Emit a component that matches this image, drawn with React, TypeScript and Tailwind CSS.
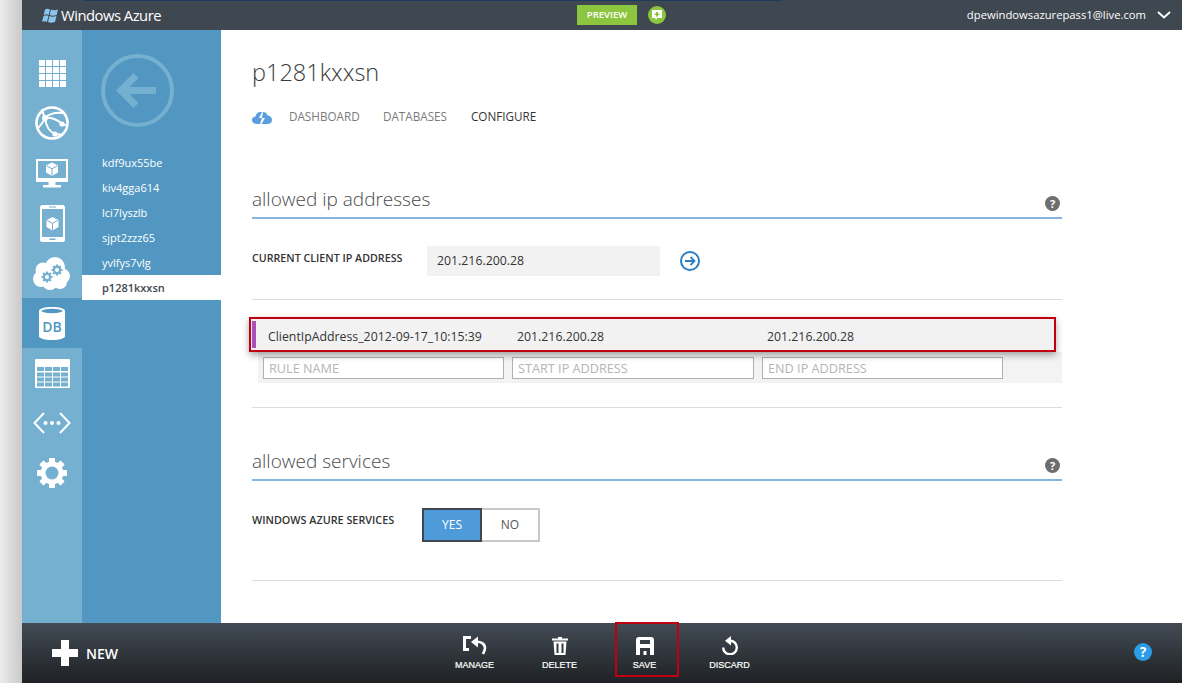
import type { ReactNode } from "react";

const FONT = { fontFamily: '"Open Sans", "Noto Sans", sans-serif' };
const RAIL = "#75b0d0";
const LIST = "#5197c1";

function GridIcon() {
  const cells = [0, 7, 14, 21];
  return (
    <svg width="27" height="27" viewBox="0 0 27 27" fill="#fff">
      {cells.map((y) => cells.map((x) => <rect key={`${x}-${y}`} x={x} y={y} width="6" height="6" />))}
    </svg>
  );
}

function GlobeIcon() {
  return (
    <svg width="34" height="34" viewBox="0 0 34 34" fill="none" stroke="#fff" strokeWidth="2">
      <circle cx="17" cy="17" r="15.500" strokeWidth="2.600" />
      <path d="M7 3c1 4 2 7 3 9M10 12c4-4 10-6 18-5M10 12c5-1 12 1 17 6l6 2M10 12c-2 5-5 8-8 11M10 12c1 8 5 14 10 16 3 0 6 1 8 1" />
      <circle cx="10" cy="12" r="3" fill="#fff" stroke="none" />
      <circle cx="27" cy="18" r="2.600" fill="#fff" stroke="none" />
      <circle cx="20" cy="28" r="2.600" fill="#fff" stroke="none" />
    </svg>
  );
}

function Cube({ x, y, s }: { x: number; y: number; s: number }) {
  return (
    <g transform={`translate(${x} ${y}) scale(${s})`}>
      <path d="M6 0l6 3v7l-6 3.500L0 10V3z" fill="#fff" />
      <path d="M0.500 3.300L6 6.300l5.500-3M6 6.300v7" fill="none" stroke={RAIL} strokeWidth="1" />
    </g>
  );
}

function MonitorIcon() {
  return (
    <svg width="32" height="29" viewBox="0 0 32 29">
      <path d="M0 0h32v23H19.500v3H25v2.500H7V26h5.500v-3H0z" fill="#fff" />
      <rect x="2" y="2" width="28" height="17" fill={RAIL} />
      <Cube x={10} y={3.500} s={1} />
    </svg>
  );
}

function PhoneIcon() {
  return (
    <svg width="25" height="37" viewBox="0 0 25 37">
      <rect width="25" height="37" rx="2.500" fill="#fff" />
      <rect x="2" y="4" width="21" height="28" fill={RAIL} />
      <rect x="9" y="1.500" width="7" height="1" fill={RAIL} />
      <rect x="9.500" y="33.500" width="6" height="1.500" fill={RAIL} />
      <Cube x={6.500} y={12} s={1} />
    </svg>
  );
}

function Cog({ cx, cy, r, fill, hole, holeR }: { cx: number; cy: number; r: number; fill: string; hole: string; holeR: number }) {
  return (
    <g>
      {[0, 45, 90, 135].map((a) => (
        <rect key={a} x={cx - r * 0.2} y={cy - r} width={r * 0.4} height={r * 2} rx={r * 0.06} fill={fill} transform={`rotate(${a} ${cx} ${cy})`} />
      ))}
      <circle cx={cx} cy={cy} r={r * 0.76} fill={fill} />
      <circle cx={cx} cy={cy} r={holeR} fill={hole} />
    </g>
  );
}

function CloudGearsIcon() {
  const puffs = [[10, 13, 7.5], [22, 10, 10], [8, 22, 8], [29.500, 19, 7.5], [27, 25, 7], [17, 25, 8]];
  return (
    <svg width="38" height="33" viewBox="0 0 38 33">
      {puffs.map(([cx, cy, r]) => <circle key={`${cx}-${cy}`} cx={cx} cy={cy} r={r} fill="#fff" />)}
      <Cog cx={14} cy={20} r={5.500} fill={RAIL} hole="#fff" holeR={2} />
      <Cog cx={24} cy={13} r={5.500} fill={RAIL} hole="#fff" holeR={2} />
    </svg>
  );
}

function DbIcon() {
  return (
    <div className="relative w-[26px] h-[33px]">
      <svg width="26" height="33" viewBox="0 0 26 33" className="absolute inset-0">
        <path d="M0 4C0 1.500 6 0 13 0s13 1.500 13 4v25c0 2.500-6 4-13 4S0 31.500 0 29z" fill="#fff" />
        <ellipse cx="13" cy="4" rx="10.500" ry="2.200" fill={LIST} />
      </svg>
      <span className="absolute left-0 right-0 top-[10px] text-center text-[14px] leading-[20px] font-semibold text-[#5197c1]">DB</span>
    </div>
  );
}

function TableIcon() {
  const rows = [8, 13.500, 18.500, 23.500];
  const cols = [2, 10, 18, 26];
  return (
    <svg width="35" height="29" viewBox="0 0 35 29">
      <rect width="35" height="29" rx="1" fill="#fff" />
      {rows.map((y) => cols.map((x) => <rect key={`${x}-${y}`} x={x} y={y} width="7" height="4" fill={RAIL} />))}
    </svg>
  );
}

function CodeIcon() {
  return (
    <svg width="38" height="22" viewBox="0 0 38 22" fill="none" stroke="#fff" strokeWidth="2">
      <path d="M11 1L1.500 11 11 21M27 1l9.500 10L27 21" />
      <circle cx="12.500" cy="11" r="2" fill="#fff" stroke="none" />
      <circle cx="19" cy="11" r="2" fill="#fff" stroke="none" />
      <circle cx="25.500" cy="11" r="2" fill="#fff" stroke="none" />
    </svg>
  );
}

function GearIcon() {
  return (
    <svg width="30" height="30" viewBox="0 0 30 30">
      <Cog cx={15} cy={15} r={15} fill="#fff" hole={RAIL} holeR={6.500} />
    </svg>
  );
}

function HelpDot() {
  return (
    <span className="mb-[3px] w-[15px] h-[15px] rounded-full bg-[#6d6e70] text-white text-[11px] leading-[15px] font-bold text-center">?</span>
  );
}

function SectionHeading({ title }: { title: string }) {
  return (
    <div className="flex items-end justify-between h-[38px] border-b-2 border-[#84b4e0] pb-[3px] pr-[2px]">
      <h2 className="text-[19px] leading-[30px] font-light text-[#4a4a4a]">{title}</h2>
      <HelpDot />
    </div>
  );
}

function ToolbarAction({ label, children }: { label: string; children: ReactNode }) {
  return (
    <div className="w-[85px] mb-[2px] flex flex-col items-center">
      <div className="h-[24px] flex items-center justify-center">{children}</div>
      <span className="mt-[1px] text-[9px] leading-[12px] text-white [-webkit-text-stroke:0.2px_#fff]" style={{ fontFamily: '"Liberation Sans", sans-serif' }}>{label}</span>
    </div>
  );
}

const navIcons = [GridIcon, GlobeIcon, MonitorIcon, PhoneIcon, CloudGearsIcon, DbIcon, TableIcon, CodeIcon, GearIcon];
const servers = ["kdf9ux55be", "kiv4gga614", "lci7lyszlb", "sjpt2zzz65", "yvlfys7vlg"];

export default function App() {
  return (
    <div className="relative flex w-[1182px] h-[683px] overflow-hidden bg-white" style={FONT}>
      <div className="w-[22px] shrink-0 bg-gradient-to-r from-[#ececec] to-[#c9c9c9]" />
      <div className="flex-1 flex flex-col min-w-0">
        {/* top bar */}
        <header className="h-[30px] shrink-0 bg-[#3f4750] flex items-center text-white relative">
          <div className="w-[20px] shrink-0" />
          <svg width="17" height="15" viewBox="0 0 17 15">
            <path d="M3 1.500c2-1 3-1 5 0L6.700 7c-2-1-3-1-5 0zM9 1.500c2 1 4 1 7 0L14.700 7c-3 1-5 1-7 0zM1.500 8c2-1 3-1 5 0L5 14c-2-1-3-1-5 0zM7.500 8c2 1 4 1 7 0L13 14c-3 1-5 1-7 0z" fill="#8ac4ea" />
          </svg>
          <span className="ml-[2px] text-[14.800px] tracking-[-0.5px]">Windows Azure</span>
          <div className="w-[416px] shrink-0" />
          <span className="w-[60px] h-[20px] bg-[#8cc63f] text-[9.500px] leading-[20px] text-center font-semibold">PREVIEW</span>
          <span className="ml-[11px] w-[18px] h-[18px] rounded-full bg-[#8cc63f] flex items-center justify-center">
            <svg width="12" height="12" viewBox="0 0 12 12">
              <path d="M1 1h10v8H6l-1 2-1-2H1z" fill="#fff" />
              <path d="M5 3h2v1.500h1.500v1.500H7v1.500H5V6H3.500V4.500H5z" fill="#8cc63f" />
            </svg>
          </span>
          <span className="ml-auto text-[11.250px] mr-[11px]">dpewindowsazurepass1@live.com</span>
          <svg width="14" height="8" viewBox="0 0 14 8" fill="none" stroke="#fff" strokeWidth="2" className="mr-[11px]">
            <path d="M1 1l6 5.500L13 1" />
          </svg>
          <div className="absolute left-[62px] right-[400px] top-0 h-px bg-[#1d3b5c]" />
        </header>

        <div className="flex-1 flex min-h-0">
          {/* icon rail */}
          <nav className="w-[60px] shrink-0 bg-[#75b0d0] pt-[18px] flex flex-col">
            {navIcons.map((Icon, i) => (
              <div key={i} className={`h-[50px] flex items-center justify-center ${i === 5 ? "bg-[#5197c1]" : ""}`}>
                <Icon />
              </div>
            ))}
          </nav>

          {/* server list */}
          <aside className="w-[139px] shrink-0 bg-[#5197c1] flex flex-col">
            <div className="h-[120px] pl-[19px] pt-[24px]">
              <svg width="73" height="73" viewBox="0 0 73 73" fill="none" stroke={RAIL}>
                <circle cx="36.500" cy="36.500" r="34.500" strokeWidth="4" />
                <path d="M55 36.500H24" strokeWidth="7" />
                <path d="M35 21.500L20 36.500l15 15" strokeWidth="7" />
              </svg>
            </div>
            {servers.map((s) => (
              <div key={s} className="h-[25px] pl-[20px] text-[11px] leading-[25px] text-white">{s}</div>
            ))}
            <div className="h-[25px] pl-[20px] bg-white text-[11px] leading-[25px] font-semibold text-[#3f4750]">p1281kxxsn</div>
          </aside>

          {/* content */}
          <main className="flex-1 pl-[31px] w-0">
            <div className="w-[810px]">
              <h1 className="mt-[24px] text-[23.500px] leading-[36px] font-light text-[#3a3a3a]">p1281kxxsn</h1>
              <div className="mt-[17px] h-[20px] flex items-center text-[11.700px] text-[#7a7a7a]">
                <svg width="20" height="13" viewBox="0 0 20 13" className="mr-[17px]">
                  <path d="M5 13c-3 0-5-1.500-5-4 0-2 1.500-3.500 3.500-3.500C4 2.500 6 1 8 1h2L7 7h3l-2 6zM11 1c2 0 4 1 4.500 3.500 2.500 0 4.500 1.500 4.500 4.500 0 2.500-2 4-4.500 4H9.500l3.500-6h-3z" fill="#5a9fdc" />
                </svg>
                <span className="w-[94px]">DASHBOARD</span>
                <span className="w-[88px]">DATABASES</span>
                <span className="text-[#333]">CONFIGURE</span>
              </div>

              <div className="mt-[54px]">
                <SectionHeading title="allowed ip addresses" />
              </div>
              <div className="mt-[27px] flex items-start h-[30px]">
                <span className="w-[175px] mt-[5px] text-[10.700px] leading-[14px] font-semibold text-[#333]">CURRENT CLIENT IP ADDRESS</span>
                <div className="w-[233px] h-[30px] bg-[#f2f2f2] pl-[10px] text-[12.300px] leading-[30px] text-[#333]">201.216.200.28</div>
                <span className="ml-[20px] mt-[5px] w-[20px] h-[20px] rounded-full border-2 border-[#2a7fc4] flex items-center justify-center">
                  <svg width="11" height="10" viewBox="0 0 11 10" fill="none" stroke="#2a7fc4" strokeWidth="1.800">
                    <path d="M0 5h9M5.500 1l4 4-4 4" />
                  </svg>
                </span>
              </div>
              <div className="mt-[23px] h-px bg-[#dcdcdc]" />

              <div className="mt-[17px] -ml-[3px] w-[807px] h-[35px] border-2 border-[#c00012] bg-[#f2f2f2] shadow-[0_3px_7px_rgba(0,0,0,0.35)] flex items-center pl-[1px] relative z-10 text-[12.300px] text-[#333]">
                <div className="w-[4px] h-[27px] bg-[#a94fb5]" />
                <span className="ml-[12px] pt-[5px] w-[249px]">ClientIpAddress_2012-09-17_10:15:39</span>
                <span className="pt-[5px] w-[250px]">201.216.200.28</span>
                <span className="pt-[5px]">201.216.200.28</span>
              </div>
              <div className="ml-[6px] h-[31px] bg-[#f3f3f3] flex items-center pl-[5px] gap-[8px]">
                <div className="w-[241px] h-[22px] bg-white border border-[#b0b0b0] pl-[5px] text-[12.700px] leading-[20px] text-[#b5b5b5]">RULE NAME</div>
                <div className="w-[242px] h-[22px] bg-white border border-[#b0b0b0] pl-[5px] text-[12.700px] leading-[20px] text-[#b5b5b5]">START IP ADDRESS</div>
                <div className="w-[241px] h-[22px] bg-white border border-[#b0b0b0] pl-[5px] text-[12.700px] leading-[20px] text-[#b5b5b5]">END IP ADDRESS</div>
              </div>
              <div className="mt-[24px] h-px bg-[#dcdcdc]" />

              <div className="mt-[35px]">
                <SectionHeading title="allowed services" />
              </div>
              <div className="mt-[27px] flex items-start h-[34px]">
                <span className="w-[170px] mt-[5px] text-[10.800px] leading-[14px] font-semibold text-[#333]">WINDOWS AZURE SERVICES</span>
                <div className="w-[60px] h-[34px] bg-[#4f9bd9] border-2 border-[#3f4750] text-white text-[12px] leading-[30px] text-center">YES</div>
                <div className="w-[58px] h-[34px] border-2 border-l-0 border-[#c8c8c8] text-[#555] text-[12px] leading-[30px] text-center">NO</div>
              </div>
              <div className="mt-[38px] h-px bg-[#dcdcdc]" />
            </div>
          </main>
        </div>

        {/* bottom bar */}
        <footer className="h-[60px] shrink-0 bg-gradient-to-b from-[#434b55] to-[#1f2225] flex items-center text-white relative">
          <svg width="26" height="26" viewBox="0 0 26 26" className="ml-[30px]" fill="#fff">
            <path d="M9 0h8v9h9v8h-9v9H9v-9H0V9h9z" />
          </svg>
          <span className="ml-[8px] text-[14px] font-semibold">NEW</span>
          <div className="w-[314px] shrink-0" />
          <ToolbarAction label="MANAGE">
            <svg width="24" height="19" viewBox="0 0 24 19">
              <path d="M8 1.500H1.500v12H6" fill="none" stroke="#fff" strokeWidth="3" />
              <path d="M8 6l7-5.500v11z" fill="#fff" />
              <path d="M12 6c6-1 10 2 10 6 0 2-1 4-2 6" fill="none" stroke="#fff" strokeWidth="2.600" />
            </svg>
          </ToolbarAction>
          <ToolbarAction label="DELETE">
            <svg width="16" height="19" viewBox="0 0 16 19" fill="#fff">
              <path d="M0 2.500h6V1h4v1.500h6v2H0zM1.500 5.500h13L13.500 19h-11zM4.500 7.500v9.500h2V7.500zM9.500 7.500v9.500h2V7.500z" fillRule="evenodd" />
            </svg>
          </ToolbarAction>
          <ToolbarAction label="SAVE">
            <svg width="18" height="18" viewBox="0 0 18 18" fill="#fff">
              <path fillRule="evenodd" d="M3 0h12a3 3 0 013 3v15h-4v-7H4v7H0V3a3 3 0 013-3zM4 3v4h10V3z" />
              <rect x="7.500" y="14" width="3" height="4" />
            </svg>
          </ToolbarAction>
          <ToolbarAction label="DISCARD">
            <svg width="16" height="19" viewBox="0 0 16 19" fill="none" stroke="#fff" strokeWidth="2.400">
              <path d="M8 4.700a6.800 6.800 0 11-6.800 6.800" />
              <path d="M9 0v9.500L3 4.700z" fill="#fff" stroke="none" />
            </svg>
          </ToolbarAction>
          <span className="ml-auto mr-[30px] mb-[2px] w-[18px] h-[18px] rounded-full bg-[#2a9ce8] text-white text-[14px] leading-[18px] font-bold text-center">?</span>
          <div className="absolute left-[593px] top-[-1px] w-[64px] h-[55px] border-2 border-[#c00012]" />
        </footer>
      </div>
    </div>
  );
}
